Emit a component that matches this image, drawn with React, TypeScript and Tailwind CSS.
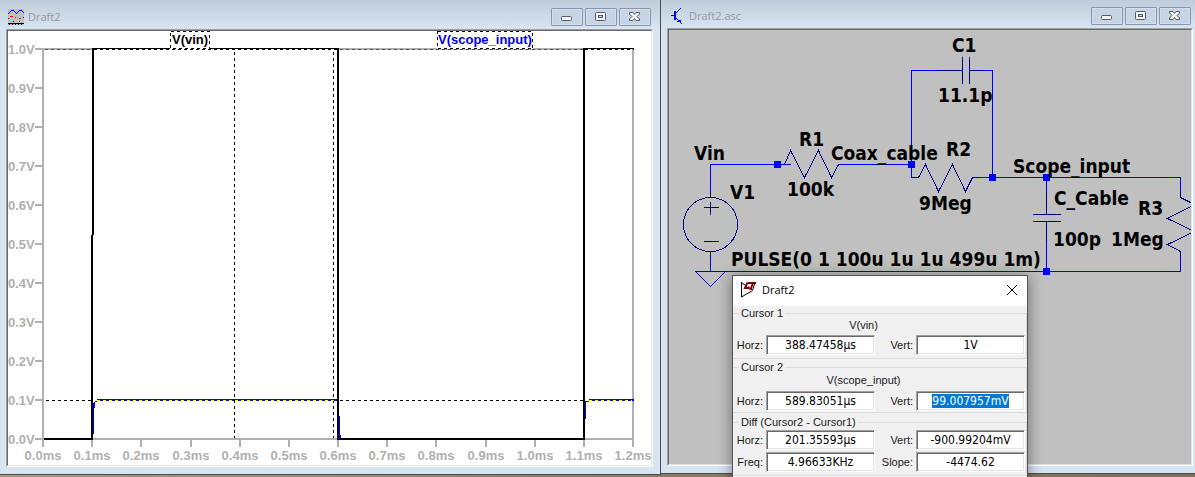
import type { ReactNode } from "react";

const GREY = "#b0b0b0";

const voltTicks = Array.from({ length: 11 }, (_, i) => ({
  y: 48 + i * 39,
  label: `${((10 - i) / 10).toFixed(1)}V`,
}));

const timeTicks = Array.from({ length: 13 }, (_, i) => ({
  x: Math.round(43 + (i * 590) / 12),
  label: `${(i / 10).toFixed(1)}ms`,
}));

const schematicLabels = [
  { x: 694, y: 160, text: "Vin" },
  { x: 799, y: 146, text: "R1" },
  { x: 787, y: 196, text: "100k" },
  { x: 730, y: 199, text: "V1" },
  { x: 831, y: 160, text: "Coax_cable" },
  { x: 952, y: 52, text: "C1" },
  { x: 938, y: 102, text: "11.1p" },
  { x: 946, y: 156, text: "R2" },
  { x: 919, y: 210, text: "9Meg" },
  { x: 1013, y: 173, text: "Scope_input" },
  { x: 1054, y: 205, text: "C_Cable" },
  { x: 1138, y: 215, text: "R3" },
  { x: 1053, y: 246, text: "100p" },
  { x: 1111, y: 246, text: "1Meg" },
  { x: 731, y: 266, text: "PULSE(0 1 100u 1u 1u 499u 1m)" },
];

const junctions = [
  [777, 164],
  [911, 164],
  [992, 177],
  [1046, 177],
  [1046, 271],
];

function PlotIcon() {
  return (
    <svg width="16" height="16" viewBox="0 0 16 16" shapeRendering="crispEdges" aria-hidden="true">
      <rect width="16" height="16" fill="#c0c0c0" />
      <path
        d="M0 4h1v1h-1zM1 3h1v1h-1zM2 2h1v1h-1zM3 1h3v1h-3zM6 2h1v1h-1zM7 3h1v1h-1zM8 4h1v1h-1zM9 3h1v1h-1zM10 2h1v1h-1zM11 1h3v1h-3zM14 2h1v1h-1zM15 3h1v1h-1z"
        fill="#0000ff"
      />
      <path d="M2 7h3v1h-3zM7 8h1v1h-1zM11 9h2v1h-2z" fill="#ff0000" />
      <path
        d="M0 9h1v1h-1zM5 12h1v1h-1zM11 12h1v1h-1zM15 8h1v1h-1zM0 14h16v1h-16zM1 15h1v1h-1zM4 15h1v1h-1zM7 15h1v1h-1zM10 15h1v1h-1zM13 15h1v1h-1z"
        fill="#000"
      />
    </svg>
  );
}

function TransistorIcon() {
  return (
    <svg width="16" height="16" viewBox="0 0 16 16" shapeRendering="crispEdges" aria-hidden="true">
      <path
        d="M2 7h3v1h-3zM5 3h2v9h-2zM7 4h1v1h-1zM8 3h1v1h-1zM9 2h1v1h-1zM10 1h1v1h-1zM11 0h1v1h-1zM7 10h1v1h-1zM8 11h1v1h-1zM9 12h1v1h-1zM10 12h1v2h-1zM8 13h3v1h-3zM11 12h1v3h-1zM12 15h1v1h-1z"
        fill="#0000ff"
      />
    </svg>
  );
}

function LogoIcon() {
  return (
    <svg width="16" height="16" viewBox="0 0 16 16" fill="none" aria-hidden="true">
      <path d="M1.500 0V15L12.500 8.500L14.500 2M1.500 0.500L7 4.500" stroke="#000" />
      <path d="M7.500 0.500L5 6H8.500L9 4.500M8 1H16M13 1L10.500 7.500M9.500 7H12" stroke="#800000" strokeWidth="2" />
    </svg>
  );
}

function WindowButton({ label, children }: { label: string; children: ReactNode }) {
  return (
    <button
      type="button"
      aria-label={label}
      className="flex h-[18px] w-8 items-center justify-center rounded-[1px] border border-[#8795b1] bg-[#c7d4e3] shadow-[inset_0_0_0_1px_#d3deea]"
    >
      <svg width="14" height="12" viewBox="0 0 14 12" aria-hidden="true">
        {children}
      </svg>
    </button>
  );
}

function WindowButtons() {
  return (
    <div className="flex gap-0.5">
      <WindowButton label="Minimize">
        <rect x="1.500" y="5.500" width="10" height="4" rx="1" fill="#f4f4f4" stroke="#555b6a" />
      </WindowButton>
      <WindowButton label="Maximize">
        <rect x="1.500" y="1.500" width="10" height="8" rx="1" fill="#f4f4f4" stroke="#555b6a" />
        <rect x="4.500" y="4.500" width="4" height="2" fill="#c7d4e3" stroke="#555b6a" />
      </WindowButton>
      <WindowButton label="Close">
        <path
          d="M1.500 1.500H5L6.500 3.500L8 1.500H11.500V3L9 5.500L11.500 8V9.500H8L6.500 7.500L5 9.500H1.500V8L4 5.500L1.500 3Z"
          fill="#f4f4f4"
          stroke="#555b6a"
          strokeLinejoin="round"
        />
      </WindowButton>
    </div>
  );
}

function PlotView() {
  return (
    <svg viewBox="8 31 643 434" className="block w-full bg-white" role="img" aria-label="Waveform plot">
      <g shapeRendering="crispEdges" fill={GREY}>
        <rect x="42" y="48" width="592" height="2" />
        <rect x="42" y="48" width="2" height="392" />
        <rect x="632" y="48" width="2" height="392" />
        <rect x="42" y="438" width="592" height="2" />
        {voltTicks.map((t) => (
          <rect key={t.label} x="35" y={t.y} width="7" height="2" />
        ))}
        {timeTicks.map((t) => (
          <rect key={t.label} x={t.x - 1} y="440" width="2" height="7" />
        ))}
      </g>

      <g fontFamily='"Liberation Sans", Arial, sans-serif' fontSize="13" fontWeight="bold" fill={GREY}>
        {voltTicks.map((t) => (
          <text key={t.label} x="8" y={t.y + 6}>
            {t.label}
          </text>
        ))}
        {timeTicks.map((t) => (
          <text key={t.label} x={t.x} y="460" textAnchor="middle">
            {t.label}
          </text>
        ))}
      </g>

      <g shapeRendering="crispEdges" fill="none">
        {/* V(scope_input) */}
        <g fill="#0000ff">
          <rect x="93" y="403" width="1" height="31" />
          <rect x="94" y="402" width="1" height="6" />
          <rect x="95" y="401" width="2" height="1" />
          <rect x="97" y="399" width="240" height="2" />
          <rect x="339" y="416" width="1" height="22" />
          <rect x="340" y="435" width="1" height="3" />
          <rect x="585" y="401" width="1" height="18" />
          <rect x="586" y="401" width="3" height="1" />
          <rect x="589" y="399" width="45" height="2" />
        </g>
        {/* V(vin) */}
        <g fill="#000">
          <rect x="44" y="438" width="49" height="2" />
          <rect x="91" y="235" width="2" height="205" />
          <rect x="92" y="48" width="2" height="187" />
          <rect x="94" y="48" width="243" height="1" />
          <rect x="337" y="48" width="2" height="392" />
          <rect x="339" y="438" width="246" height="2" />
          <rect x="583" y="48" width="2" height="392" />
          <rect x="585" y="48" width="49" height="1" />
        </g>
        <path d="M94 49.500H337M585 49.500H632" stroke="#fff" />
        <g strokeDasharray="3 3">
          <path d="M94 49.500H337M585 49.500H634" stroke="#000" />
          <path d="M45 49.500H91M340 49.500H583" stroke="#4f4f4f" />
          <path d="M234.500 52V438M333.500 52V438" stroke="#000" />
          <path d="M46 400.500H91M340 400.500H583" stroke="#000" />
          <path d="M97 400.500H337M589 400.500H632" stroke="#ffff00" />
        </g>
        <rect x="170" y="31" width="40" height="18" fill="#fff" />
        <rect x="437" y="31" width="96" height="18" fill="#fff" />
        <g stroke="#000" strokeDasharray="3 3">
          <rect x="170.500" y="31.500" width="39" height="17" />
          <rect x="437.500" y="31.500" width="95" height="17" />
        </g>
      </g>
      <g fontFamily='"Liberation Sans", Arial, sans-serif' fontSize="13" fontWeight="bold">
        <text x="172" y="44" fill="#000">
          V(vin)
        </text>
        <text x="438" y="44" fill="#0000ff">
          V(scope_input)
        </text>
      </g>
    </svg>
  );
}

function SchematicView() {
  return (
    <svg viewBox="669 30 522 434" className="block w-full bg-[#c0c0c0]" role="img" aria-label="Schematic">
      <g transform="translate(0.5 0.5)" fill="none" strokeWidth="1" shapeRendering="crispEdges">
        {/* component symbols */}
        <g stroke="#000080">
          <path d="M777 164H784L790 150L804 177L818 150L831 177L838 164H845" />
          <path d="M911 177H918L925 164L938 191L952 164L965 191L972 177H978" />
          <path d="M1180 190V197L1194 204L1167 218L1194 231L1167 244L1180 251V258" />
          <path d="M939 70H962M962 56V83M969 56V83M969 70H980" />
          <path d="M1046 191V214M1032 214H1060M1032 221H1060M1046 221V241" />
          <circle cx="710" cy="224" r="27" />
          <path d="M703 207H718M710 201V214M703 241H718M710 190V197M710 250V258" />
        </g>
        {/* wires */}
        <g stroke="#0000ff">
          <path d="M710 190V164H790M838 164H911M911 177V70H939M980 70H992V177M978 177H1180V190" />
          <path d="M1046 177V191M1046 241V271M710 258V271M1180 258V271H695L710 286L725 271" />
        </g>
        <g fill="#0000ff">
          {junctions.map(([x, y]) => (
            <rect key={`${x}-${y}`} x={x - 3.5} y={y - 3.5} width="7" height="7" />
          ))}
        </g>
      </g>
      <g
        fontFamily='"DejaVu Sans Condensed", Tahoma, "DejaVu Sans", sans-serif'
        fontSize="19"
        fontWeight="bold"
        fill="#000"
      >
        {schematicLabels.map((l) => (
          <text key={l.text} x={l.x} y={l.y}>
            {l.text}
          </text>
        ))}
      </g>
    </svg>
  );
}

type ReadoutProps = {
  id: string;
  label: string;
  value: string;
  selected?: boolean;
};

function Readout({ id, label, value, selected }: ReadoutProps) {
  return (
    <>
      <label htmlFor={id} className="text-right whitespace-nowrap">
        {label}
      </label>
      <input
        id={id}
        type="text"
        defaultValue={value}
        autoFocus={selected}
        onFocus={(e) => e.currentTarget.select()}
        className="h-5 w-full min-w-0 border border-t-[#a0a0a0] border-r-white border-b-white border-l-[#a0a0a0] bg-white text-center font-['DejaVu_Sans_Condensed',Tahoma,sans-serif] text-[12px] leading-[14px] text-black shadow-[inset_1px_1px_#696969,inset_-1px_-1px_#e3e3e3] outline-none selection:bg-[#0078d7] selection:text-white"
      />
    </>
  );
}

function ReadoutRow({ children }: { children: ReactNode }) {
  return (
    <div className="grid grid-cols-[30px_1fr_35px_1fr] items-center gap-[3px] pr-px">{children}</div>
  );
}

function CursorDialog() {
  return (
    <div
      role="dialog"
      aria-labelledby="cursor-title"
      className="absolute top-[275px] left-[71px] w-[296px] border border-[#555] bg-[#f0f0f0] pb-2 font-['Liberation_Sans',Arial,sans-serif] text-[11px] leading-3 text-[#1a1a1a] shadow-[0_2px_14px_rgba(0,0,0,0.45)]"
    >
      <div className="flex h-[30px] items-center gap-1.5 bg-white pr-[9px] pb-0.5 pl-[7px]">
        <LogoIcon />
        <h2
          id="cursor-title"
          className="flex-1 font-['Open_Sans','Segoe_UI',sans-serif] text-[11px] leading-4 text-black"
        >
          Draft2
        </h2>
        <button type="button" aria-label="Close">
          <svg width="12" height="12" viewBox="0 0 12 12" aria-hidden="true">
            <path d="M1 1L11 11M11 1L1 11" stroke="#000" strokeWidth="1" />
          </svg>
        </button>
      </div>

      <fieldset className="mt-px border-y border-r border-[#dcdcdc] pb-[3px]">
        <legend className="ml-1.5 px-0.5">Cursor 1</legend>
        <p className="h-4 pr-8 text-center">V(vin)</p>
        <ReadoutRow>
          <Readout id="c1-horz" label="Horz:" value="388.47458µs" />
          <Readout id="c1-vert" label="Vert:" value="1V" />
        </ReadoutRow>
      </fieldset>

      <fieldset className="mt-0.5 border-y border-r border-[#dcdcdc] pb-px">
        <legend className="ml-1.5 px-0.5">Cursor 2</legend>
        <p className="h-[18px] pt-px pr-8 text-center">V(scope_input)</p>
        <ReadoutRow>
          <Readout id="c2-horz" label="Horz:" value="589.83051µs" />
          <Readout id="c2-vert" label="Vert:" value="99.007957mV" selected />
        </ReadoutRow>
      </fieldset>

      <fieldset className="mt-[3px] border-y border-r border-[#dcdcdc] pt-0.5 pb-[3px]">
        <legend className="ml-1.5 px-0.5">Diff (Cursor2 - Cursor1)</legend>
        <div className="flex flex-col gap-0.5">
          <ReadoutRow>
            <Readout id="diff-horz" label="Horz:" value="201.35593µs" />
            <Readout id="diff-vert" label="Vert:" value="-900.99204mV" />
          </ReadoutRow>
          <ReadoutRow>
            <Readout id="diff-freq" label="Freq:" value="4.96633KHz" />
            <Readout id="diff-slope" label="Slope:" value="-4474.62" />
          </ReadoutRow>
        </div>
      </fieldset>
    </div>
  );
}

const titleClass = "flex-1 font-['Open_Sans','Segoe_UI',sans-serif] text-[11px] leading-4 text-[#999]";
const clientClass =
  "border border-t-[#a0a0a0] border-r-white border-b-white border-l-[#a0a0a0]";
const innerClass =
  "border border-t-[#696969] border-r-[#e3e3e3] border-b-[#e3e3e3] border-l-[#696969]";

function App() {
  return (
    <div className="h-screen overflow-hidden bg-linear-to-r from-[#a99b84] via-[#8d7d64] to-[#7d705c]">
      <div className="grid grid-cols-[661fr_534fr] items-start">
        <section className="border-r border-b border-[#4b4b4b] bg-[#d7e4f2] bg-linear-to-b from-[#bfccda] to-[#d7e4f2] to-[29px] pr-[7px] pb-[7px] pl-1.5">
          <header className="flex h-[29px] items-center gap-1 px-0.5 pt-[5px]">
            <PlotIcon />
            <h1 className={titleClass}>Draft2</h1>
            <WindowButtons />
          </header>
          <div className={clientClass}>
            <div className={innerClass}>
              <PlotView />
            </div>
          </div>
        </section>

        <div className="relative">
          <section className="border-b border-[#4b4b4b] bg-[#d7e4f2] bg-linear-to-b from-[#bfccda] to-[#d7e4f2] to-[28px] pr-0.5 pb-[7px] pl-1.5">
            <header className="flex h-7 items-center gap-1 px-0.5 pt-1">
              <TransistorIcon />
              <h1 className={titleClass}>Draft2.asc</h1>
              <WindowButtons />
            </header>
            <div className={clientClass}>
              <div className={innerClass}>
                <SchematicView />
              </div>
            </div>
          </section>
          <CursorDialog />
        </div>
      </div>
    </div>
  );
}

export default App;
